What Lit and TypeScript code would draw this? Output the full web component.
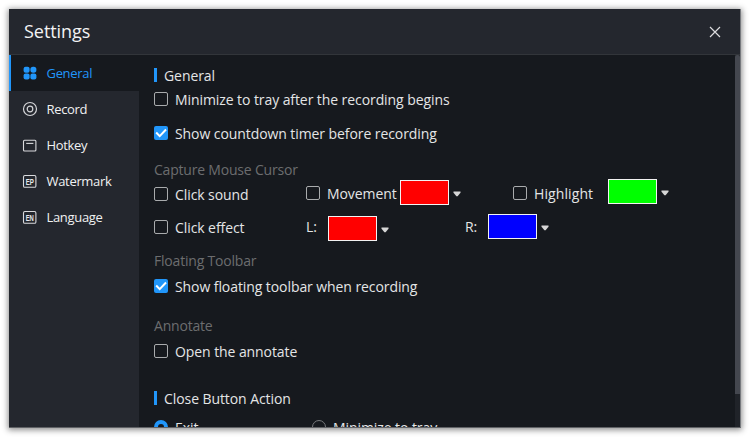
import { LitElement, html, css, svg, nothing } from "lit";
import { customElement, property } from "lit/decorators.js";
import { classMap } from "lit/directives/class-map.js";

const badge = (text: string) => svg`<rect x=".5" y="1.5" width="12.4" height="11.8" rx="1.4" fill="none" stroke="#d9dadd" stroke-width="1.1"/>
  <text x="2.7" y="10.5" font-size="8.6" font-family="Liberation Sans, sans-serif" font-weight="bold" letter-spacing="0" textLength="8.2" lengthAdjust="spacingAndGlyphs" fill="#e6e7e9">${text}</text>`;

const icons: Record<string, unknown> = {
  general: svg`<g fill="#2196fa"><rect x=".6" y=".8" width="6" height="5.9" rx="2"/><rect x="7.4" y=".8" width="6" height="5.9" rx="2.6"/><rect x=".6" y="7.5" width="6" height="5.9" rx="2"/><rect x="7.4" y="7.5" width="6" height="5.9" rx="2"/></g>`,
  record: svg`<g fill="none" stroke="#d4d5d8" stroke-width="1.2"><circle cx="7" cy="7" r="6.5"/><circle cx="7" cy="7" r="2.8"/></g>`,
  hotkey: svg`<g fill="none" stroke="#d9dadd" stroke-width="1.1"><rect x=".5" y="2.3" width="12.4" height="10.7" rx="1"/><path d="M3.2 5.4h7.2"/></g>`,
  watermark: badge("EP"),
  language: badge("EN"),
};

@customElement("nav-item")
export class NavItem extends LitElement {
  @property() icon = "";
  @property() label = "";
  @property({ type: Boolean }) active = false;
  static styles = css`
    :host { display: block; }
    .item { box-sizing: border-box; height: 36px; display: flex; align-items: center; padding-left: 14px; color: #f0f1f2; font-size: 13px; letter-spacing: -.32px; }
    .active { background: #16191e; color: #2196fa; border-left: 2px solid #2196fa; padding-left: 12px; }
    svg { width: 14px; height: 14px; overflow: visible; margin-right: 9.5px; }
  `;
  render() {
    return html`<div class=${classMap({ item: true, active: this.active })}>
      <svg viewBox="0 0 14 14">${icons[this.icon]}</svg><span>${this.label}</span>
    </div>`;
  }
}

@customElement("check-option")
export class CheckOption extends LitElement {
  @property({ type: Boolean }) checked = false;
  @property({ type: Boolean }) radio = false;
  static styles = css`
    :host { display: block; }
    .option { display: flex; align-items: center; height: 20px; gap: 7px; white-space: nowrap; }
    .box { box-sizing: border-box; width: 14px; height: 14px; border: 1px solid #a9abad; border-radius: 2px; flex: none; }
    .checked { background: #2196fa; border: 0; }
    .round { border-radius: 50%; border-color: #77797c; }
    .picked { border: 4.5px solid #2196fa; }
    svg { display: block; width: 14px; height: 14px; }
  `;
  render() {
    return html`<div class="option">
      <span class=${classMap({ box: true, checked: this.checked && !this.radio, round: this.radio, picked: this.radio && this.checked })}>
        ${this.checked && !this.radio ? html`<svg viewBox="0 0 14 14"><path d="M2.2 6.5l3.5 3.6 6.3-6.6" fill="none" stroke="#fff" stroke-width="2"/></svg>` : nothing}
      </span><span><slot></slot></span>
    </div>`;
  }
}

@customElement("color-picker")
export class ColorPicker extends LitElement {
  @property() color = "#f00";
  static styles = css`
    :host { display: flex; align-items: center; gap: 4px; }
    .swatch { box-sizing: border-box; width: 49px; height: 25px; border: 1px solid #f2f2f2; }
    svg { width: 8px; height: 6px; margin-top: 3px; }
  `;
  render() {
    return html`<div class="swatch" style="background:${this.color}"></div>
      <svg viewBox="0 0 8 6"><path d="M.5 .5h7v1.3L4.6 5.2H3.4L.5 1.8z" fill="#d6d6d6"/></svg>`;
  }
}

@customElement("app-root")
export class AppRoot extends LitElement {
  static styles = css`
    :host { display: block; box-sizing: border-box; width: 750px; height: 437px; padding: 9px; background: #fff; overflow: hidden; font-family: "Open Sans", "Noto Sans", sans-serif; font-size: 14px; letter-spacing: -.08px; color: #e4e5e6; }
    .window { width: 732px; height: 419px; display: grid; grid-template: 46px 1fr / 130px 1fr; background: #16191e; overflow: hidden; box-sizing: border-box; border-right: 1px solid #777a7e; border-bottom: 1px solid #606266; box-shadow: 0 1px 6px 1px rgba(0, 0, 0, .45); }
    header { grid-column: 1 / -1; box-sizing: border-box; display: flex; align-items: center; justify-content: space-between; padding: 0 19px 0 15px; background: #24272e; border-bottom: 1px solid #32353a; color: #f3f3f4; }
    .title { font-size: 18px; letter-spacing: -.05px; margin-top: -1px; }
    .close { width: 12px; height: 12px; }
    nav { background: #24272e; min-height: 0; }
    main { display: flex; min-height: 0; justify-content: space-between; overflow: hidden; }
    .content { padding: 10px 0 0 15px; }
    .heading { display: flex; align-items: center; height: 20px; gap: 7px; }
    .heading::before { content: ""; width: 3px; height: 14px; background: #2196fa; }
    .sub { height: 20px; line-height: 20px; color: #6c6d6f; letter-spacing: -.2px; }
    .row { display: flex; align-items: flex-start; height: 20px; white-space: nowrap; }
    .c1 { width: 152px; }
    .r-first { margin-top: 4px; }
    .r-second { margin-top: 14px; }
    .s-mouse { margin-top: 17px; }
    .r-mouse { margin-top: 4px; height: 33px; }
    .r-click { height: 20px; }
    .s-float { margin-top: 14px; }
    .r-float { margin-top: 5px; }
    .s-note { margin-top: 20px; }
    .r-note { margin-top: 5px; }
    .h-close { margin-top: 27px; }
    .r-close { margin-top: 9px; }
    .up { margin-top: -1px; }
    .move { width: 94px; }
    .p-move { width: 113px; margin-top: -4px; }
    .high { width: 95px; letter-spacing: .1px; }
    .p-high { margin-top: -5px; }
    .lab { line-height: 20px; width: 22px; }
    .p-left { width: 137px; margin-top: -1px; }
    .right { width: 23px; }
    .p-right { margin-top: -3px; }
    .exit { width: 158px; }
    .track { width: 5px; background: #202329; flex: none; }
    .thumb { height: 339px; background: #44474f; border-radius: 2px 2px 0 0; }
  `;
  render() {
    return html`<div class="window">
      <header><span class="title">Settings</span>
        <svg class="close" viewBox="0 0 12 12"><path d="M1 1l10 10M11 1L1 11" stroke="#dcdcde" stroke-width="1.2"/></svg>
      </header>
      <nav>
        <nav-item icon="general" label="General" active></nav-item>
        <nav-item icon="record" label="Record"></nav-item>
        <nav-item icon="hotkey" label="Hotkey"></nav-item>
        <nav-item icon="watermark" label="Watermark"></nav-item>
        <nav-item icon="language" label="Language"></nav-item>
      </nav>
      <main>
        <div class="content">
          <div class="heading">General</div>
          <div class="row r-first"><check-option>Minimize to tray after the recording begins</check-option></div>
          <div class="row r-second"><check-option checked>Show countdown timer before recording</check-option></div>
          <div class="sub s-mouse">Capture Mouse Cursor</div>
          <div class="row r-mouse">
            <check-option class="c1">Click sound</check-option>
            <check-option class="up move">Movement</check-option>
            <color-picker class="p-move" color="#f00"></color-picker>
            <check-option class="up high">Highlight</check-option>
            <color-picker class="p-high" color="#0f0"></color-picker>
          </div>
          <div class="row r-click">
            <check-option class="c1">Click effect</check-option>
            <span class="lab">L:</span>
            <color-picker class="p-left" color="#f00"></color-picker>
            <span class="lab right">R:</span>
            <color-picker class="p-right" color="#00f"></color-picker>
          </div>
          <div class="sub s-float">Floating Toolbar</div>
          <div class="row r-float"><check-option checked>Show floating toolbar when recording</check-option></div>
          <div class="sub s-note">Annotate</div>
          <div class="row r-note"><check-option>Open the annotate</check-option></div>
          <div class="heading h-close">Close Button Action</div>
          <div class="row r-close">
            <check-option class="exit" radio checked>Exit</check-option>
            <check-option radio>Minimize to tray</check-option>
          </div>
        </div>
        <div class="track"><div class="thumb"></div></div>
      </main>
    </div>`;
  }
}
